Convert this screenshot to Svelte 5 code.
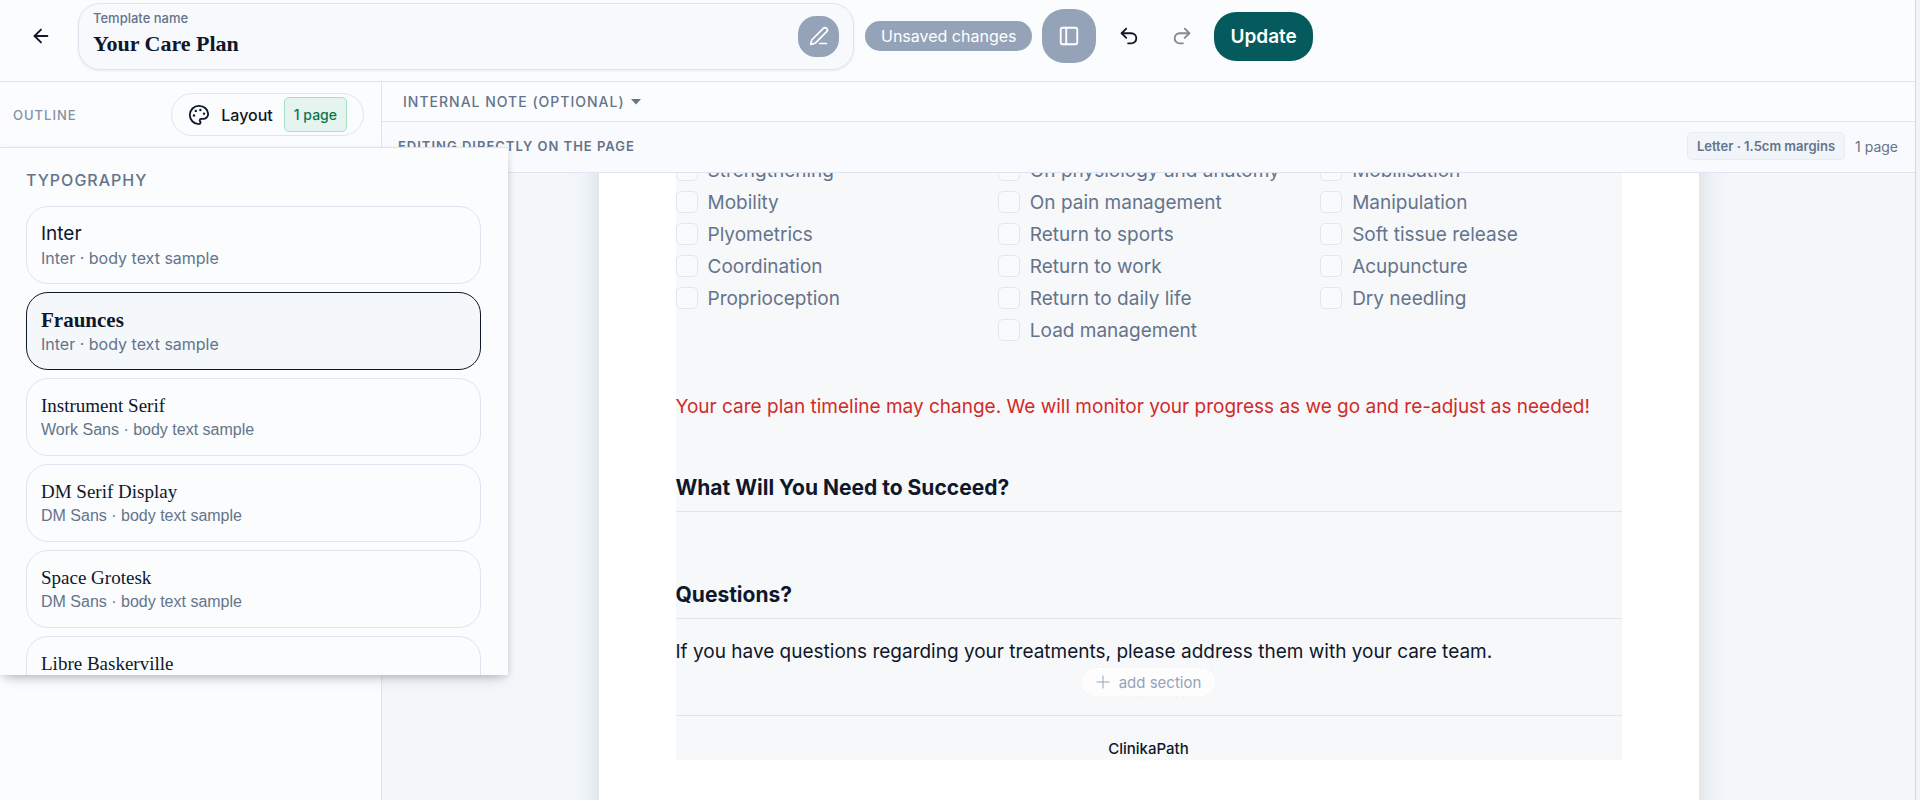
<script>
    let templateName = $state("Your Care Plan");
    let activeFont = $state("Fraunces");

    // heading is the css stack for the name, sample the one for the line below it
    const sans = '"Inter", sans-serif';
    const arial = '"Liberation Sans", Arial, sans-serif';
    const times = '"Liberation Serif", "Times New Roman", serif';

    const fonts = [
        { name: "Inter", body: "Inter", heading: sans, sample: sans },
        { name: "Fraunces", body: "Inter", heading: times, sample: sans, bold: true },
        { name: "Instrument Serif", body: "Work Sans", heading: times, sample: arial },
        { name: "DM Serif Display", body: "DM Sans", heading: times, sample: arial },
        { name: "Space Grotesk", body: "DM Sans", heading: times, sample: arial },
        { name: "Libre Baskerville", body: "Source Sans", heading: times, sample: arial }
    ];

    const checklist = [
        ["Strengthening", "Mobility", "Plyometrics", "Coordination", "Proprioception"],
        ["On physiology and anatomy", "On pain management", "Return to sports", "Return to work", "Return to daily life", "Load management"],
        ["Mobilisation", "Manipulation", "Soft tissue release", "Acupuncture", "Dry needling"]
    ];
</script>

<div class="app">
    <header>
        <button class="icon-button" aria-label="Back">
            <svg width="22" height="22" viewBox="0 0 24 24"><path d="M12 19l-7-7 7-7" /><path d="M19 12H5" /></svg>
        </button>
        <div class="name-box">
            <label>
                <span>Template name</span>
                <input type="text" bind:value={templateName} />
            </label>
            <button class="edit" aria-label="Edit name">
                <svg width="20" height="20" viewBox="0 0 24 24">
                    <path d="M13 21h8" />
                    <path d="M21.200 6.800a2.800 2.800 0 0 0-4-4L3.800 16.200a2 2 0 0 0-.5.8L2 21.400a.5.5 0 0 0 .6.6L7 20.700a2 2 0 0 0 .8-.5z" />
                </svg>
            </button>
        </div>
        <span class="status">Unsaved changes</span>
        <button class="panel-toggle" aria-label="Toggle sidebar">
            <svg width="22" height="22" viewBox="0 0 24 24"><rect x="3" y="3" width="18" height="18" rx="2" /><path d="M9 3v18" /></svg>
        </button>
        <button class="icon-button" aria-label="Undo">
            <svg width="22" height="22" viewBox="0 0 24 24"><path d="M9 14L4 9l5-5" /><path d="M4 9h10.500a5.500 5.500 0 0 1 0 11H11" /></svg>
        </button>
        <button class="icon-button" aria-label="Redo" disabled>
            <svg width="22" height="22" viewBox="0 0 24 24"><path d="M15 14l5-5-5-5" /><path d="M20 9H9.500a5.500 5.500 0 0 0 0 11H13" /></svg>
        </button>
        <button class="update">Update</button>
    </header>

    <div class="body">
        <aside>
            <div class="outline-bar">
                <span class="outline">Outline</span>
                <button class="layout">
                    <svg width="22" height="22" viewBox="0 0 24 24">
                        <path d="M12 2a10 10 0 1 0 0 20c1 0 1.700-.8 1.700-1.700 0-.5-.2-.9-.5-1.200-.2-.3-.4-.7-.4-1.100 0-1 .7-1.700 1.700-1.700h2C19.500 16.300 22 13.900 22 10.900 22 6 17.500 2 12 2z" />
                        <g class="dots"><circle cx="13.500" cy="6.500" r="1.300" /><circle cx="17.500" cy="10.500" r="1.300" /><circle cx="8.500" cy="7.500" r="1.300" /><circle cx="6.500" cy="12.500" r="1.300" /></g>
                    </svg>
                    Layout
                    <span class="pages">1 page</span>
                </button>
            </div>

            <!-- drops down over the outline and part of the page -->
            <section class="menu">
                <h3>Typography</h3>
                {#each fonts as font}
                    <button
                        class="font"
                        class:active={font.name === activeFont}
                        onclick={() => (activeFont = font.name)}
                    >
                        <span class="font-name" class:bold={font.bold} style="font-family: {font.heading}">{font.name}</span>
                        <span class="sample" style="font-family: {font.sample}">{font.body} · body text sample</span>
                    </button>
                {/each}
            </section>
        </aside>

        <main>
            <button class="note">
                Internal note (optional)
                <svg width="10" height="6" viewBox="0 0 10 6"><path d="M0 0h10L5 5.500z" /></svg>
            </button>
            <div class="toolbar">
                <span class="mode">Editing directly on the page</span>
                <span class="paper">Letter · 1.5cm margins</span>
                <span class="count">1 page</span>
            </div>
            <div class="canvas">
                <article class="sheet">
                    <div class="content">
                        <div class="columns">
                            {#each checklist as column}
                                <div>
                                    {#each column as item}
                                        <label class="check"><input type="checkbox" />{item}</label>
                                    {/each}
                                </div>
                            {/each}
                        </div>
                        <p class="warning">Your care plan timeline may change. We will monitor your progress as we go and re-adjust as needed!</p>
                        <h2>What Will You Need to Succeed?</h2>
                        <h2 class="questions">Questions?</h2>
                        <p class="answer">If you have questions regarding your treatments, please address them with your care team.</p>
                        <button class="add">
                            <svg width="14" height="14" viewBox="0 0 14 14"><path d="M7 1v12M1 7h12" /></svg>
                            add section
                        </button>
                        <footer>ClinikaPath</footer>
                    </div>
                </article>
            </div>
        </main>
    </div>
</div>

<style>
    :global(body) {
        --text: #0f172a;
        --muted: #64748b;
        --line: #dfe4f0;
        --surface: #fafcfd;
        --grey: #94a3b8;
        margin: 0;
        background: #f3f4f6;
        color: var(--text);
        font-family: "Inter", sans-serif;
    }

    * {
        box-sizing: border-box;
    }

    button,
    input {
        font: inherit;
        color: inherit;
        padding: 0;
        margin: 0;
        border: 0;
        background: none;
    }

    button {
        display: flex;
        align-items: center;
        justify-content: center;
        flex-shrink: 0;
        cursor: pointer;
    }

    svg {
        flex-shrink: 0;
        fill: none;
        stroke: currentColor;
        stroke-width: 2;
        stroke-linecap: round;
        stroke-linejoin: round;
    }

    .app {
        display: flex;
        flex-direction: column;
        height: 100vh;
        margin-right: 4px;
        overflow: hidden;
        border-right: 1px solid #d5d8de;
        background: var(--surface);
    }

    header {
        display: flex;
        align-items: center;
        height: 82px;
        padding: 0 14px 9px;
        border-bottom: 1px solid var(--line);
    }

    .icon-button {
        width: 53px;
        height: 53px;
    }

    .icon-button:disabled {
        opacity: 0.5;
    }

    .name-box {
        display: flex;
        align-items: center;
        width: 776px;
        height: 67px;
        margin: 0 11px;
        padding: 0 14px;
        border: 1px solid var(--line);
        border-radius: 22px;
        background: #f8f9fd;
        box-shadow: 0 1px 3px rgba(15, 23, 42, 0.08);
    }

    .name-box label {
        display: flex;
        flex: 1;
        flex-direction: column;
        padding-bottom: 4px;
        color: var(--muted);
        font-size: 13px;
        font-weight: 500;
        line-height: 20px;
    }

    .name-box input {
        height: 32px;
        color: var(--text);
        font-family: "Liberation Serif", serif;
        font-size: 22px;
        font-weight: 700;
    }

    .edit {
        width: 41px;
        height: 41px;
        border-radius: 18px;
        background: var(--grey);
        color: #fff;
    }

    .status {
        padding: 0 16px;
        border-radius: 15px;
        background: var(--grey);
        color: #fff;
        font-size: 16px;
        line-height: 30px;
        white-space: nowrap;
    }

    .panel-toggle {
        width: 54px;
        height: 54px;
        margin: 0 6px 0 10px;
        border-radius: 22px;
        background: var(--grey);
        color: #fff;
    }

    .update {
        height: 49px;
        margin-left: 6px;
        padding: 0 16px;
        border-radius: 22px;
        background: #045a5d;
        color: #fff;
        font-size: 19px;
        font-weight: 600;
    }

    .body {
        display: flex;
        flex: 1;
        min-height: 0;
    }

    aside {
        position: relative;
        z-index: 1;
        flex: 0 0 382px;
        border-right: 1px solid var(--line);
    }

    .outline-bar {
        display: flex;
        align-items: center;
        justify-content: space-between;
        height: 65px;
        padding: 0 17px 0 13px;
    }

    .outline {
        color: #8390a5;
        font-size: 13px;
        font-weight: 500;
        letter-spacing: 1px;
        text-transform: uppercase;
    }

    .layout {
        gap: 11px;
        height: 43px;
        padding: 0 16px;
        border: 1px solid var(--line);
        border-radius: 22px;
        font-size: 16px;
        font-weight: 500;
    }

    .dots {
        fill: currentColor;
        stroke: none;
    }

    .pages {
        padding: 0 9px;
        border: 1px solid #a7dfc8;
        border-radius: 5px;
        background: #e6f4ef;
        color: #08764e;
        font-size: 14px;
        line-height: 33px;
    }

    .menu {
        position: absolute;
        top: 65px;
        left: 0;
        width: 508px;
        height: 66vh;
        padding: 0 27px 0 26px;
        overflow: hidden;
        border-top: 1px solid var(--line);
        background: var(--surface);
        box-shadow: 0 8px 12px -6px rgba(15, 23, 42, 0.25), 1px 2px 6px rgba(15, 23, 42, 0.1);
    }

    h3 {
        margin: 21px 0 15px;
        color: var(--muted);
        font-size: 16px;
        font-weight: 500;
        line-height: 22px;
        letter-spacing: 1px;
        text-transform: uppercase;
    }

    .font {
        flex-direction: column;
        align-items: flex-start;
        width: 100%;
        height: 78px;
        margin-bottom: 8px;
        padding: 2px 14px 0;
        border: 1px solid var(--line);
        border-radius: 22px;
    }

    .font.active {
        border-color: var(--text);
        background: #f4f8fb;
    }

    .font-name {
        font-size: 19px;
        line-height: 24px;
    }

    .font-name.bold {
        font-size: 21px;
        font-weight: 700;
    }

    .sample {
        color: var(--muted);
        font-size: 16px;
        line-height: 24px;
    }

    main {
        display: flex;
        flex: 1;
        flex-direction: column;
        min-width: 0;
    }

    .note {
        justify-content: flex-start;
        gap: 6px;
        height: 40px;
        padding: 0 21px;
        border-bottom: 1px solid var(--line);
        color: var(--muted);
        font-size: 14px;
        font-weight: 500;
        letter-spacing: 1px;
        text-transform: uppercase;
    }

    .note svg {
        fill: currentColor;
        stroke: none;
    }

    .toolbar {
        display: flex;
        flex-shrink: 0;
        align-items: center;
        height: 51px;
        padding: 0 17px 2px 16px;
        border-bottom: 1px solid var(--line);
        background: #f9fafd;
        color: var(--muted);
        font-size: 14px;
    }

    .mode {
        flex: 1;
        font-size: 13px;
        font-weight: 600;
        letter-spacing: 1px;
        text-transform: uppercase;
    }

    .paper {
        margin-right: 10px;
        padding: 0 9px;
        border: 1px solid #e6ecf2;
        border-radius: 5px;
        background: #f1f5f9;
        font-size: 13px;
        font-weight: 600;
        line-height: 26px;
    }

    .canvas {
        flex: 1;
        min-height: 0;
        overflow: hidden;
        background: #f3f7fa;
    }

    /* the negative margin keeps the sheet scrolled past its top */
    .sheet {
        max-width: 1100px;
        margin: -96px auto 0;
        padding: 77px;
        background: #fff;
        box-shadow: 0 0 24px rgba(71, 85, 105, 0.2);
    }

    .content {
        background: #f7f8fa;
    }

    .columns {
        display: grid;
        grid-template-columns: repeat(3, 1fr);
        gap: 21px;
    }

    .check {
        display: flex;
        align-items: center;
        gap: 10px;
        height: 32px;
        color: var(--muted);
        font-size: 19px;
        white-space: nowrap;
    }

    .check input {
        appearance: none;
        width: 22px;
        height: 22px;
        border: 1px solid #e2e6ef;
        border-radius: 5px;
        background: #f9fafb;
    }

    .check input:checked {
        background: var(--grey);
    }

    .warning {
        margin: 47px 0 0;
        color: #d02b2b;
        font-size: 19px;
        line-height: 28px;
    }

    h2 {
        margin: 52px 0 0;
        padding-bottom: 8px;
        border-bottom: 1px solid var(--line);
        font-size: 21px;
        font-weight: 700;
        line-height: 30px;
    }

    .questions {
        margin-top: 68px;
    }

    .answer {
        margin: 19px 0 0;
        font-size: 19px;
        line-height: 28px;
    }

    .add {
        gap: 9px;
        height: 30px;
        margin: 1px auto 0;
        padding: 0 14px;
        border: 1px dashed #f0f2f5;
        border-radius: 15px;
        background: #fdfdfe;
        color: var(--grey);
        font-size: 15px;
    }

    .add svg {
        stroke-width: 1;
    }

    footer {
        margin-top: 18px;
        padding-top: 22px;
        border-top: 1px solid var(--line);
        font-size: 15px;
        font-weight: 500;
        line-height: 22px;
        text-align: center;
    }
</style>
